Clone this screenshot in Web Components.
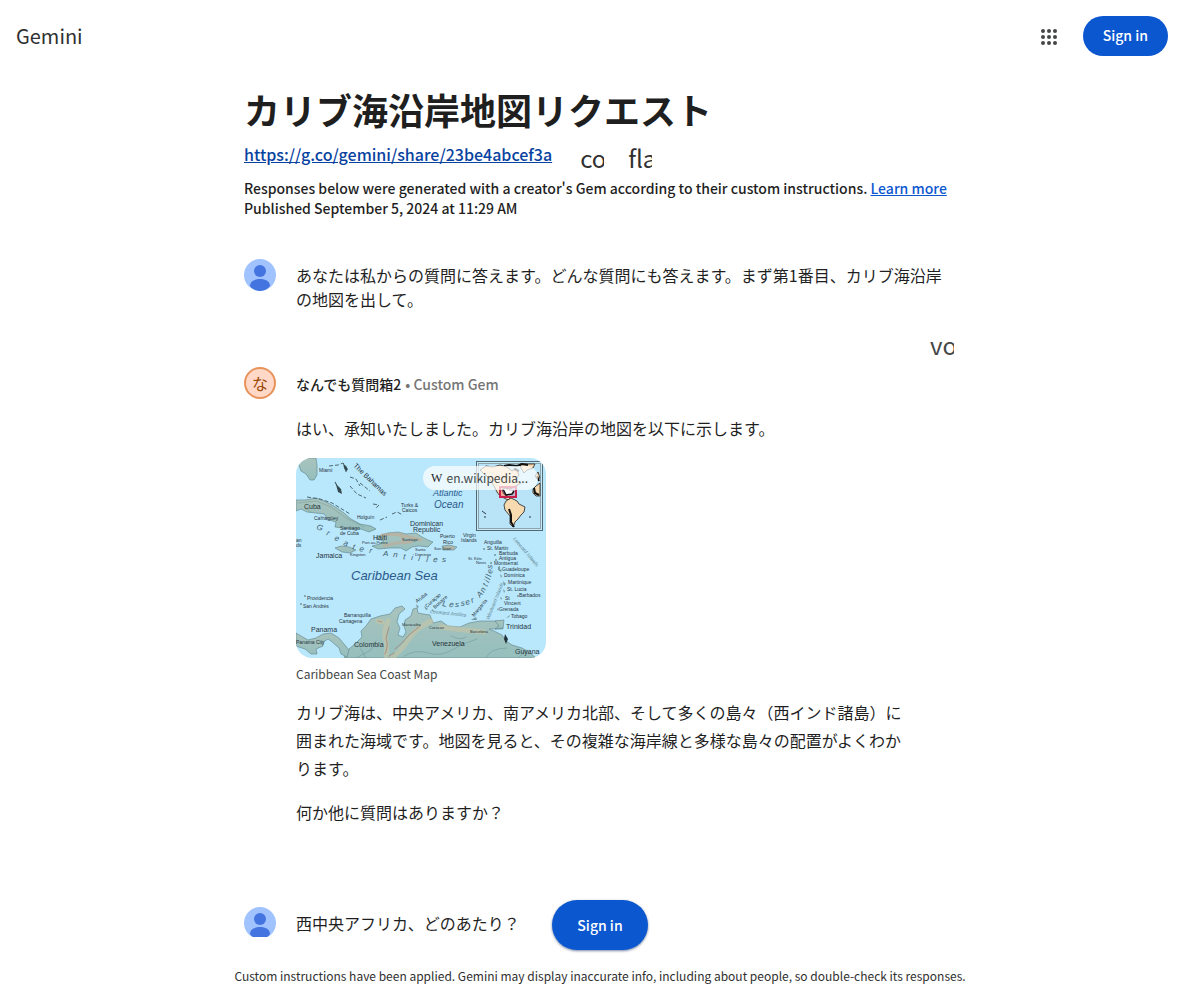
<!DOCTYPE html>
<html lang="ja">
<head>
<meta charset="utf-8">
<meta name="viewport" content="width=device-width, initial-scale=1">
<title>Gemini</title>
<style>
  html, body { height: 100%; }
  body { margin: 0; background: #fff; color: #1f1f1f; font-family: "Noto Sans CJK JP", sans-serif; font-size: 16px; line-height: 24px; }
</style>
</head>
<body>
<gem-app>
  <gem-header slot="header"></gem-header>
  <share-head link="https://g.co/gemini/share/23be4abcef3a">
    <span slot="title">カリブ海沿岸地図リクエスト</span>
    <span slot="note">Responses below were generated with a creator's Gem according to their custom instructions.</span>
    <span slot="date">Published September 5, 2024 at 11:29 AM</span>
  </share-head>
  <user-turn>あなたは私からの質問に答えます。どんな質問にも答えます。まず第1番目、カリブ海沿岸の地図を出して。</user-turn>
  <gem-turn name="なんでも質問箱2" initial="な">
    <gem-text>はい、承知いたしました。カリブ海沿岸の地図を以下に示します。</gem-text>
    <map-card source="en.wikipedia...">Caribbean Sea Coast Map</map-card>
    <gem-text>カリブ海は、中央アメリカ、南アメリカ北部、そして多くの島々（西インド諸島）に囲まれた海域です。地図を見ると、その複雑な海岸線と多様な島々の配置がよくわかります。</gem-text>
    <gem-text>何か他に質問はありますか？</gem-text>
  </gem-turn>
  <user-turn>西中央アフリカ、どのあたり？</user-turn>
  <pill-button slot="action" raised>Sign in</pill-button>
  <span slot="footer">Custom instructions have been applied. Gemini may display inaccurate info, including about people, so double-check its responses.</span>
</gem-app>

<script>
class BaseElement extends HTMLElement {
  constructor() {
    super();
    this.attachShadow({ mode: 'open' });
  }
  connectedCallback() {
    this.shadowRoot.innerHTML = '<style>*{box-sizing:border-box}</style>' + this.render();
  }
}

customElements.define('gem-app', class extends BaseElement {
  render() {
    return `<style>
      :host { display: flex; flex-direction: column; height: 100vh; }
      main { flex: 1; min-height: 0; overflow: hidden; }
      .column { max-width: 744px; margin: 0 auto; padding: 15px 16px 0; }
      footer { position: relative; padding: 27px 16px 13px; background: #fff; font-size: 12px; line-height: 23px; text-align: center; color: #303030; }
      .action { position: absolute; bottom: 50px; left: 0; right: 0; display: flex; justify-content: center; }
    </style>
    <slot name="header"></slot>
    <main><div class="column"><slot></slot></div></main>
    <footer><div class="action"><slot name="action"></slot></div><slot name="footer"></slot></footer>`;
  }
});

customElements.define('gem-header', class extends BaseElement {
  render() {
    let dots = '';
    for (const y of [4, 10, 16]) for (const x of [4, 10, 16]) dots += `<circle cx="${x}" cy="${y}" r="2"/>`;
    return `<style>
      :host { display: block; }
      header { display: flex; align-items: center; justify-content: space-between; padding: 16px 32px 16px 16px; }
      a { color: #303030; text-decoration: none; font-size: 20px; line-height: 40px; }
      .right { display: flex; align-items: center; gap: 14px; }
      button { display: flex; align-items: center; justify-content: center; width: 40px; height: 40px; padding: 2px 0 0; border: 0; background: none; }
      svg { fill: #444746; }
    </style>
    <header><a href="#">Gemini</a>
      <div class="right">
        <button aria-label="Google apps"><svg width="20" height="20" viewBox="0 0 20 20">${dots}</svg></button>
        <pill-button>Sign in</pill-button>
      </div>
    </header>`;
  }
});

customElements.define('pill-button', class extends BaseElement {
  render() {
    return `<style>
      :host { display: block; }
      button { height: 40px; padding: 0 20px 2px; border: 0; border-radius: 100px; background: #0b57d0; color: #fff; font: 500 14px/20px "Noto Sans CJK JP", sans-serif; }
      :host([raised]) button { height: 50px; padding: 0 25px; box-shadow: 0 1px 3px rgba(0,0,0,.3), 0 1px 2px rgba(11,87,208,.3); }
    </style><button><slot></slot></button>`;
  }
});

customElements.define('clip-icon', class extends BaseElement {
  render() {
    return `<style>
      :host { display: block; }
      button { display: block; width: 24px; height: 24px; padding: 0; border: 0; background: none; overflow: hidden; color: #303030; text-align: left; white-space: nowrap; font: 24px/24px "Noto Sans CJK JP", sans-serif; }
      :host([muted]) button { color: #444746; }
    </style><button><slot></slot></button>`;
  }
});

customElements.define('share-head', class extends BaseElement {
  render() {
    return `<style>
      :host { display: block; margin-bottom: 41px; }
      h1 { margin: 0 0 11px; font-size: 36px; line-height: 44px; font-weight: 700; }
      .link { display: flex; align-items: center; gap: 24px; margin-bottom: 12px; }
      .link a { margin-right: 4px; color: #0842a0; font-size: 16px; font-weight: 500; line-height: 24px; }
      clip-icon { margin: 4px 0 -4px; }
      p { margin: 0; font-size: 14px; line-height: 20px; font-weight: 500; }
      p a { color: #0b57d0; }
    </style>
    <h1><slot name="title"></slot></h1>
    <div class="link"><a href="#">${this.getAttribute('link')}</a><clip-icon>co</clip-icon><clip-icon>fla</clip-icon></div>
    <p><slot name="note"></slot> <a href="#">Learn more</a></p>
    <p><slot name="date"></slot></p>`;
  }
});

customElements.define('user-turn', class extends BaseElement {
  render() {
    return `<style>
      :host { display: flex; gap: 20px; }
      svg { flex: none; }
      p { margin: 4px 0 0; }
    </style>
    <svg width="32" height="32" viewBox="0 0 32 32" aria-hidden="true">
      <clipPath id="round"><circle cx="16" cy="16" r="16"/></clipPath>
      <g clip-path="url(#round)"><rect width="32" height="32" fill="#a0c3ff"/>
      <circle cx="16" cy="12" r="6" fill="#4374e0"/>
      <path d="M6 27c0-4.500 4.500-7 10-7s10 2.500 10 7c-2 3-6 5-10 5s-8-2-10-5z" fill="#4374e0"/></g>
    </svg>
    <p><slot></slot></p>`;
  }
});

customElements.define('gem-turn', class extends BaseElement {
  render() {
    return `<style>
      :host { display: block; margin: 22px 0 81px; }
      .tools { display: flex; justify-content: flex-end; padding-right: 2px; margin-bottom: 10px; }
      .row { display: flex; gap: 20px; }
      .avatar { flex: none; display: flex; align-items: center; justify-content: center; width: 32px; height: 32px; border: 2px solid #e8925a; border-radius: 50%; background: #ffd8c7; color: #9a4600; font-size: 16px; }
      .name { display: flex; gap: 4px; padding: 5px 0 6px; font-size: 14px; line-height: 24px; font-weight: 500; }
      .kind { color: #757575; }
      .body { display: flex; flex-direction: column; gap: 16px; padding: 12px 48px 0 0; }
      .content { flex: 1; min-width: 0; }
    </style>
    <div class="tools"><clip-icon muted>vo</clip-icon></div>
    <div class="row"><div class="avatar">${this.getAttribute('initial')}</div>
      <div class="content"><div class="name"><span>${this.getAttribute('name')}</span><span class="kind">• Custom Gem</span></div>
      <div class="body"><slot></slot></div></div>
    </div>`;
  }
});

customElements.define('gem-text', class extends BaseElement {
  render() {
    return `<style>:host { display: block; } p { margin: 0; line-height: 28px; }</style><p><slot></slot></p>`;
  }
});

// x, y, size, text, rotation
const LABELS = [
  [23,14,5,'Miami'],[8,51,7,'Cuba'],[57,8,7,'The Bahamas',44],[105,49,5,'Turks &amp;'],[106,54,5,'Caicos'],
  [114,68,7,'Dominican'],[117,74,7,'Republic'],[144,80,5,'Puerto'],[147,86,5,'Rico'],[167,79,5,'Virgin'],[165,84,5,'Islands'],
  [18,62,5,'Camagüey'],[61,61,5,'Holguín'],[44,72,5,'Santiago'],[44,77,5,'de Cuba'],[77,82,7,'Haiti'],[66,86,4,'Port-au-Prince'],
  [54,98,4,'Kingston'],[20,100,7,'Jamaica'],[119,93,4,'Santo'],[119,98,4,'Domingo'],[138,92,4,'San Juan'],[106,83,4,'Santiago'],
  [0,84,5,'an'],[0,89,5,'ds'],
  [188,86,5,'Anguilla'],[191,92,5,'St. Martin'],[203,97,5,'Barbuda'],[203,102,5,'Antigua'],[198,107,5,'Montserrat'],
  [206,113,5,'Guadeloupe'],[208,119,5,'Dominica'],[212,126,5,'Martinique'],[211,133,5,'St. Lucia'],[223,139,5,'Barbados'],
  [209,142,5,'St'],[208,147,5,'Vincent'],[203,153,5,'Grenada'],[215,160,5,'Tobago'],[210,171,7,'Trinidad'],[172,102,4,'St. Kitts'],[180,106,4,'Nevis'],
  [11,142,5,'Providencia'],[7,150,5,'San Andrés'],[48,159,5,'Barranquilla'],[43,165,5,'Cartagena'],[15,174,7,'Panama'],[0,186,5,'Panama City'],
  [58,189,7,'Colombia'],[106,168,4,'Maracaibo'],[133,171,4,'Caracas'],[174,175,4,'Barcelona'],[136,188,7,'Venezuela'],[219,196,7,'Guyana'],
  [121,145,5,'Aruba',-38],[131,150,5,'Curaçao',-42],[139,151,5,'Bonaire',-42],[178,159,5,'Margarita',-50]
];
const FAINT = [[134,155,5,'Leeward Antilles',6],[193,162,5,'Windward Islands',-68],[217,81,5,'Leeward Islands',50]];
const SPACED = [
  ['G',20,71,20],['r',30,77,20],['e',38,82,20],['a',47,87,18],['t',56,91,16],['e',63,93,12],['r',73,95,8],
  ['A',87,98,0],['n',97,99,6],['t',107,101,6],['i',115,102,6],['l',122,103,6],['l',130,104,6],['e',137,104,4],['s',146,104,0],
  ['L',146,148,10],['e',153,149,4],['s',159,149,0],['s',165,148,-6],['e',170,147,-14],['r',176,145,-22],
  ['A',184,140,-50],['n',188,135,-60],['t',191,129,-64],['i',193,125,-68],['l',194,122,-72],['l',195,119,-76],['e',196,116,-80],['s',196,111,-84]
];
const label = ([x, y, s, t, r = 0]) => `<text font-size="${s}" transform="translate(${x} ${y}) rotate(${r})">${t}</text>`;

customElements.define('map-card', class extends BaseElement {
  render() {
    return `<style>
      :host { display: block; }
      figure { margin: 0; }
      .frame { position: relative; width: 250px; height: 200px; border-radius: 16px; overflow: hidden; }
      svg { display: block; }
      .chip { position: absolute; top: 8px; right: 8px; display: flex; align-items: center; gap: 4px; height: 24px; padding: 0 10px 0 8px; border-radius: 12px; background: rgba(255,255,255,.7); color: #444746; font-size: 12px; line-height: 24px; text-decoration: none; }
      .chip b { width: 12px; color: #222; font: 400 12px/24px "Liberation Serif", serif; text-align: center; }
      figcaption { font-size: 12px; line-height: 16px; margin-top: 8px; color: #444746; }
    </style>
    <figure><div class="frame">
    <svg width="250" height="200" viewBox="0 0 250 200" font-family="Liberation Sans, sans-serif" fill="#26343c">
      <defs><linearGradient id="land" x1="0" y1="0" x2="0" y2="1"><stop offset="0" stop-color="#a9c3bd"/><stop offset="1" stop-color="#95bfbd"/></linearGradient></defs>
      <rect width="250" height="200" fill="#b9e7fc"/>
      <g fill="url(#land)" stroke="#5e8389" stroke-width=".6">
        <path d="M0 0H20L21 7L21 17L18 22L14 22L10 16L5 13L3 7L0 6z"/>
        <path d="M0 42L9 42L20 40L28 43L34 46L41 50L48 55L55 61L64 66L75 68L80 71L73 74L65 71L55 71L46 70L39 69L40 64L33 62L28 56L20 55L11 54L5 51L0 53z"/>
        <path d="M76 88L84 86L88 83L80 81L82 78L92 75L102 74L110 76L120 75L126 79L132 82L137 84L132 89L123 88L116 89L110 93L105 90L94 90L82 91z"/>
        <path d="M39 90L45 88L53 89L60 92L54 95L46 94z"/><path d="M146 88L153 87L161 89L158 92L147 92z"/>
        <path d="M48 200L53 191L60 185L66 179L65 173L70 168L75 161L84 158L94 156L99 150L106 148L109 151L103 156L101 164L104 170L102 177L107 179L110 174L108 168L109 162L115 158L117 151L121 150L122 155L127 156L134 157L137 165L145 163L152 168L164 169L173 165L184 163L206 163L207 171L193 171L200 174L206 177L210 183L216 187L226 190L233 194L240 200z"/>
        <path d="M0 175L5 178L12 182L20 180L27 176L35 175L43 180L48 186L53 192L51 199L45 196L43 190L35 183L32 181L27 184L27 188L20 191L21 196L15 196L9 191L0 188z"/>
        <path d="M199 163L208 162L207 170L199 171L203 168z"/>
      </g>
      <g fill="none" stroke-linecap="round" stroke-linejoin="round">
        <path d="M90 198Q92 188 89 179Q88 172 92 163M96 200Q106 192 113 181T135 163M82 163L86 164M145 169Q165 172 188 174" stroke="#c5c4a8" stroke-width="5" opacity=".65"/>
        <path d="M89 196Q93 188 90 180L93 169M99 191L107 184L113 177L124 168M82 163L86 164M93 198L98 195" stroke="#a97d6c" stroke-width="1" opacity=".75"/>
        <path d="M86 77L98 76L113 79L125 82M88 88L100 85L115 84M149 90H157M105 76L108 85" stroke="#c3aa94" stroke-width="3" opacity=".6"/>
        <path d="M2 45L20 43L35 49L50 60L68 69M9 50L15 54M24 58L31 60" stroke="#7c9d9b" stroke-width=".8" opacity=".7"/>
        <path d="M60 200L75 192L80 183M108 198Q120 191 132 195T156 192T181 181M190 200Q194 190 211 190M155 178Q165 183 170 179M222 200L231 192M70 200L65 191" stroke="#739c9e" stroke-width=".6"/>
      </g>
      <path d="M33 8L42 7L47 5L50 8L50 14M39 24L44 34M54 19L60 21L64 28M64 25L74 33M54 28L61 36L70 40M77 46L83 47L79 51M84 62L91 59M96 56L101 54L107 57M11 39L24 41L36 45L54 56" fill="none" stroke="#4d6972" stroke-width="1" stroke-dasharray="4 2"/>
      <path d="M39 23L41 27L45 31L46 36L42 34zM47 5L52 11L50 14L48 10z" fill="#34494f"/>
      <g fill="#74969d">
        <circle cx="188" cy="91" r="1"/><circle cx="199" cy="97" r="1"/><circle cx="200" cy="102" r="1"/><circle cx="195" cy="105" r="1"/><circle cx="222" cy="138" r="1"/><circle cx="9" cy="138" r="1"/><circle cx="5" cy="146" r="1"/>
        <path d="M202 109L204 108L204 112L206 111L205 114L202 112zM204 116L206 118L205 120zM207 123L210 126L208 128zM207 131L209 133L208 135zM204 139L206 140L205 142zM201 151L203 150L202 153zM210 160L214 157L213 159zM175 162L180 159L181 162zM120 146L123 149L121 150zM128 148L132 151L130 152zM136 151L139 154L136 153z"/>
        <path d="M209 176L212 181L210 186L208 181z" fill="#24343a"/>
      </g>
      <g>${LABELS.map(label).join('')}</g>
      <g fill="#608590" font-style="italic">${FAINT.map(label).join('')}</g>
      <g fill="#41606c" font-style="italic">${SPACED.map(([t,x,y,r]) => label([x,y,8,t,r])).join('')}</g>
      <g fill="#2b5a8b" font-style="italic"><text x="137" y="38" font-size="9">Atlantic</text><text x="138" y="50" font-size="10">Ocean</text><text x="55" y="122" font-size="13">Caribbean Sea</text></g>
      <rect x="180.500" y="3.500" width="66" height="69" fill="#c7eafa" stroke="#526872"/>
      <rect x="182.500" y="5.500" width="62" height="65" fill="#b9e4f8" stroke="#8ca4ac"/>
      <g fill="#f8dab0" stroke="#202020" stroke-width=".8">
        <path d="M184 12L190 8L197 9L204 7L211 9L216 13L220 10L223 17L219 22L225 25L218 29L214 31L209 30L206 32L208 36L213 39L215 43L210 41L204 38L201 34L198 28L193 20L188 16z"/>
        <path d="M210 43L215 40L221 43L223 46L229 49L228 54L225 57L222 61L219 64L217 69L214 66L214 58L209 52L208 47z"/>
        <path d="M224 6L239 6L237 10L231 12L228 15L225 10z"/>
        <path d="M244 25L240 28L237 31L237 35L240 38L244 38z"/><path d="M242 14L239 18L241 21L244 20z"/>
      </g>
      <path d="M213 51L215 57L215 64L218 69M238 30L239 35L243 37M208 8L213 7L221 8L226 6L232 7M218 11L223 13M241 18L243 23" fill="none" stroke="#111" stroke-width="2"/>
      <path d="M186 53L190 56M188 59H190M233 59H235" fill="none" stroke="#26343c"/>
      <rect x="204" y="29" width="16" height="10" fill="#d7194b" fill-opacity=".25" stroke="#c9204c" stroke-width="2"/><path d="M207 31L210 37L216 36L218 33" fill="#fff" stroke="#111" stroke-width="1.500"/>
    </svg>
    <a class="chip" href="#"><b>W</b><span>${this.getAttribute('source')}</span></a>
    </div><figcaption><slot></slot></figcaption></figure>`;
  }
});
</script>
</body>
</html>
